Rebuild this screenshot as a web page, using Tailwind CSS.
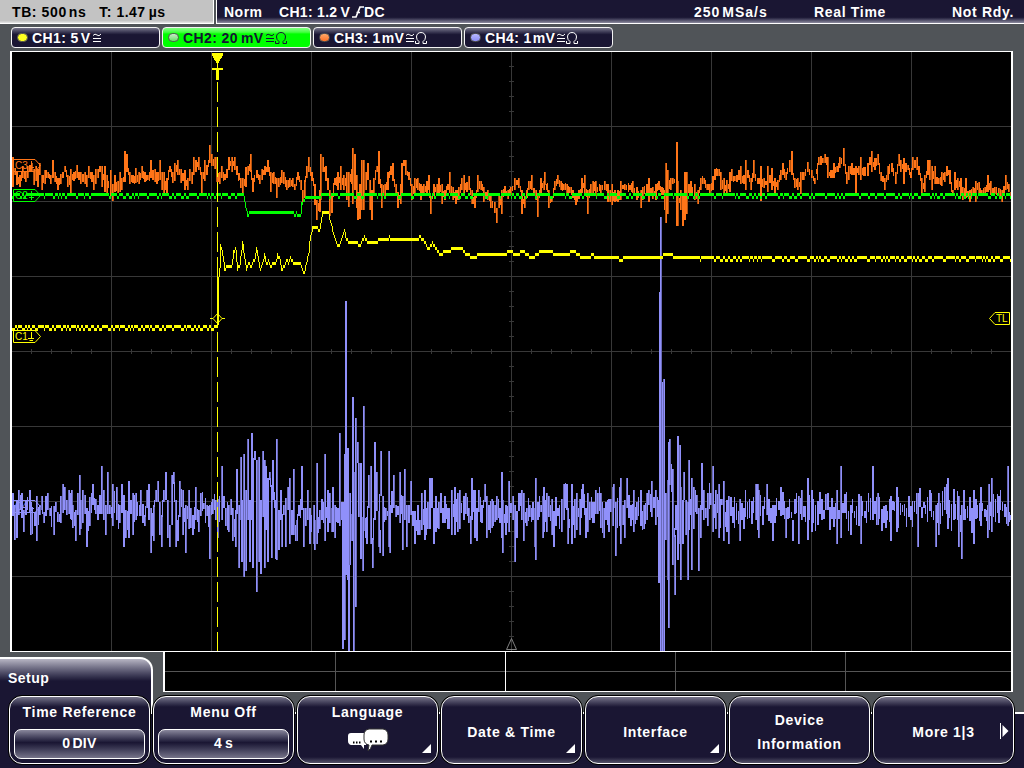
<!DOCTYPE html>
<html lang="en">
<head>
    <meta charset="UTF-8" />
    <meta name="viewport" content="width=device-width, initial-scale=1" />
    <title>Oscilloscope</title>
    <script src="https://cdn.jsdelivr.net/npm/@tailwindcss/browser@4"></script>
</head>
<body class="w-[1024px] h-[768px] overflow-hidden bg-[#505458] font-['Liberation_Sans',Arial,sans-serif] text-[14px] font-bold tracking-[0.7px] text-white whitespace-nowrap">
    <div class="flex h-full flex-col">
        <!-- Status bar -->
        <header class="flex h-6 shrink-0 gap-[2px] leading-6">
            <div class="flex w-[214px] gap-[13px] border-r border-b border-white bg-linear-to-b from-[#c3c3c3] from-90% to-[#e8e8e8] pl-3 text-black leading-[24px]">
                <span class="tracking-[0.6px]">TB: 500<span class="ml-[2px]">ns</span></span>
                <span class="tracking-[0.5px]">T: 1.47<span class="ml-[3px]">µs</span></span>
            </div>
            <div class="flex flex-1 border-l border-b border-white bg-linear-to-b from-[#1a1633] from-75% to-[#8f8da0] pl-[7px] pr-[10px]">
                <span class="w-[55px] tracking-[0.5px]">Norm</span>
                <span class="tracking-[0.3px]">CH1: 1.2<span class="ml-[3px]">V</span></span>
                <svg class="mt-[6px] ml-[2px] h-[12px] w-[12px]" viewBox="0 0 12 12" fill="none" stroke="#fff" stroke-width="1.7"><path d="M0 11H4L8 1H12M4.500 6.500H8" /></svg>
                <span class="tracking-[0.3px]">DC</span>
                <span class="ml-auto w-[120px] tracking-[1px]">250<span class="ml-[2px]">MSa/s</span></span>
                <span class="w-[138px]">Real Time</span>
                <span>Not Rdy.</span>
            </div>
        </header>

        <!-- Channels -->
        <nav class="flex h-[27px] shrink-0 gap-[2px] pt-[3px] pl-[11px] text-[14px] leading-[18px] tracking-[0.4px]">
            <div class="flex h-[21px] w-[149px] items-center rounded-[4px] border-[1.5px] border-[#f4f4f4] bg-linear-to-b from-[#77758a] via-[#1a1633] via-35% to-[#1a1633] to-75% pl-[5px]">
                <i class="mr-[4px] h-[9px] w-[11px] rounded-full border border-[#555] bg-[#ffff20]"></i>CH1: 5<span class="ml-[2px]">V</span>
                <svg class="ml-[2px] h-[10px] w-[8px]" viewBox="0 0 8 10" fill="none" stroke="#fff"><path d="M0 2.5Q2 0 4 2T8 1M0 5.5H8M0 8.5H8" /></svg>
            </div>
            <div class="flex h-[21px] w-[149px] items-center rounded-[4px] border-[1.5px] border-[#f4f4f4] bg-linear-to-b from-[#80ff80] via-[#00ff00] via-30% to-[#00ff00] pl-[5px] text-[#141432]">
                <i class="mr-[4px] h-[9px] w-[11px] rounded-full border-[1.5px] border-[#555] bg-linear-to-b from-[#c8e8c8] to-[#60e060]"></i>CH2: 20<span class="ml-[3px]">mV</span>
                <svg class="ml-[2px] h-[10px] w-[8px]" viewBox="0 0 8 10" fill="none" stroke="#141432"><path d="M0 2.5Q2 0 4 2T8 1M0 5.5H8M0 8.5H8" /></svg>
                <svg class="ml-[1px] h-[12px] w-[12px]" viewBox="0 0 12 12" fill="none" stroke="#141432"><path d="M.5 9V11.5H4V9.5Q1.5 8 1.5 5C1.5 2 3.5.5 6 .5S10.5 2 10.5 5Q10.500 8 8 9.500V11.500H11.500V9" /></svg>
            </div>
            <div class="flex h-[21px] w-[149px] items-center rounded-[4px] border-[1.5px] border-[#f4f4f4] bg-linear-to-b from-[#77758a] via-[#1a1633] via-35% to-[#1a1633] to-75% pl-[5px]">
                <i class="mr-[4px] h-[9px] w-[11px] rounded-full border border-[#555] bg-linear-to-b from-[#ffa868] to-[#ff7020]"></i>CH3: 1<span class="ml-[1px]">mV</span>
                <svg class="ml-[2px] h-[10px] w-[8px]" viewBox="0 0 8 10" fill="none" stroke="#fff"><path d="M0 2.5Q2 0 4 2T8 1M0 5.5H8M0 8.5H8" /></svg>
                <svg class="ml-[1px] h-[12px] w-[12px]" viewBox="0 0 12 12" fill="none" stroke="#fff"><path d="M.5 9V11.5H4V9.5Q1.5 8 1.5 5C1.5 2 3.5.5 6 .5S10.5 2 10.5 5Q10.500 8 8 9.500V11.500H11.500V9" /></svg>
            </div>
            <div class="flex h-[21px] w-[149px] items-center rounded-[4px] border-[1.5px] border-[#f4f4f4] bg-linear-to-b from-[#77758a] via-[#1a1633] via-35% to-[#1a1633] to-75% pl-[5px]">
                <i class="mr-[4px] h-[9px] w-[11px] rounded-full border border-[#555] bg-linear-to-b from-[#b8b8ff] to-[#8c8cf8]"></i>CH4: 1<span class="ml-[1px]">mV</span>
                <svg class="ml-[2px] h-[10px] w-[8px]" viewBox="0 0 8 10" fill="none" stroke="#fff"><path d="M0 2.5Q2 0 4 2T8 1M0 5.5H8M0 8.5H8" /></svg>
                <svg class="ml-[1px] h-[12px] w-[12px]" viewBox="0 0 12 12" fill="none" stroke="#fff"><path d="M.5 9V11.5H4V9.5Q1.5 8 1.5 5C1.5 2 3.5.5 6 .5S10.5 2 10.5 5Q10.500 8 8 9.500V11.500H11.500V9" /></svg>
            </div>
        </nav>

        <!-- Waveform display, user units are page pixels -->
        <main class="ml-[10px] h-[601px] w-[1003px] shrink-0 border-x-2 border-y border-white bg-black">
            <svg class="block h-[599px] w-[999px] font-normal tracking-normal" viewBox="12 52 999 599" fill="none">
                <g shape-rendering="crispEdges">
                    <path id="grid" stroke="#383838" />
                    <path id="c3dim" fill="#b4520f" />
                    <path id="c3" fill="#ff7518" />
                    <path id="c4dim" fill="#6a6ab8" />
                    <path id="c4" fill="#9090fa" />
                    <path id="c2" fill="#00ff00" />
                    <path id="c1" fill="#ffff00" />
                    <path d="M217.5 82V651" stroke="#ffff00" stroke-dasharray="20 5" />
                    <path d="M217.500 276V326M217.500 62V68" stroke="#ffff00" />
                    <path d="M212 53H223V55L218 64H217L212 55ZM212 68H223V70H219V80H216V70H212Z" fill="#ffff00" />
                </g>
                <path d="M217.500 313.500L222 318.500L217.500 323.500L213 318.500ZM210 318.500H213M222 318.500H225" stroke="#ffff00" />
                <path d="M511.500 638.500L506.500 649.500H516.500Z" stroke="#808080" />
                <g font-size="10" font-family="Liberation Sans">
                    <path d="M13.500 159.500H35L40.500 165.500L35 171.500H13.500ZM29 167.500H34M31.500 161V170" stroke="#ff7518" />
                    <text x="15" y="169" fill="#ff7518">C3</text>
                    <path d="M13.500 189.500H35L40.500 195.500L35 201.500H13.500ZM29 197.500H34M31.500 191V200" stroke="#00ff00" />
                    <text x="15" y="199" fill="#00ff00">C2</text>
                    <path d="M13.500 500.500H35L40.500 506.500L35 512.500H13.500ZM29 508.500H34M31.500 502V511" stroke="#9090fa" />
                    <text x="15" y="510" fill="#9090fa">C4</text>
                    <path d="M13.500 330.500H35L40.500 336.500L35 342.500H13.500ZM28 338.500H34M31.500 332V338M29.500 340.500H33" stroke="#ffff00" />
                    <text x="15" y="340" fill="#ffff00">C1</text>
                    <path d="M1009.500 312.500H995L989.500 318.500L995 324.500H1009.500Z" fill="#000" stroke="#ffff00" />
                    <text x="996" y="322" fill="#ffff00">TL</text>
                </g>
            </svg>
        </main>

        <!-- Menu title and overview strip -->
        <div class="flex h-10 shrink-0">
            <div class="relative z-10 mt-[5px] h-[57px] w-[153px] rounded-tr-[13px] border-t-2 border-r-2 border-white bg-linear-to-b from-[#b8b6c4] via-[#1a1633] via-[22px] to-[#1a1633] pl-2 leading-[39px] tracking-[0.5px]">Setup</div>
            <svg class="ml-[10px] h-10 w-[850px]" viewBox="163 652 850 40" fill="none" shape-rendering="crispEdges">
                <rect x="163" y="652" width="850" height="40" fill="#000" />
                <path d="M165 671.500H1011M335.500 652V691M675.500 652V691M845.500 652V691" stroke="#555" />
                <path d="M505.500 652V691M163 691.500H1013" stroke="#fff" />
                <path d="M164 652V691M1012 652V691" stroke="#fff" stroke-width="2" />
            </svg>
        </div>

        <!-- Soft keys -->
        <footer class="h-[76px] shrink-0 bg-[linear-gradient(transparent_20px,#fff_20px,#fff_22px,#1a1633_22px)] pt-[3px] pl-[8px]">
            <div class="relative z-20 flex gap-px text-center leading-6">
                <div class="h-[70px] w-[143px] rounded-[14px] border border-black bg-black">
                    <div class="h-full rounded-[13px] border border-white bg-linear-to-b from-[#77758a] via-[#1a1633] via-15% to-[#1a1633] px-1 pt-[3px]">
                        Time Reference
                        <div class="mt-[5px] h-[30px] rounded-[7px] border-[1.5px] border-white bg-linear-to-b from-[#8a889c] via-[#1a1633] via-45% to-[#77758a] leading-[27px] tracking-[0.3px]">0<span class="ml-[2px]">DIV</span></div>
                    </div>
                </div>
                <div class="h-[70px] w-[143px] rounded-[14px] border border-black bg-black">
                    <div class="h-full rounded-[13px] border border-white bg-linear-to-b from-[#77758a] via-[#1a1633] via-15% to-[#1a1633] px-1 pt-[3px]">
                        Menu Off
                        <div class="mt-[5px] h-[30px] rounded-[7px] border-[1.5px] border-white bg-linear-to-b from-[#8a889c] via-[#1a1633] via-45% to-[#77758a] leading-[27px] tracking-[0.3px]">4<span class="ml-[3px]">s</span></div>
                    </div>
                </div>
                <div class="h-[70px] w-[143px] rounded-[14px] border border-black bg-black">
                    <div class="relative h-full rounded-[13px] border border-white bg-[linear-gradient(#77758a,#1a1633_10px,#1a1633_60px,#55536a)] pt-[3px]">
                        Language
                        <svg class="mx-auto mt-[4px] h-[24px] w-[42px]" viewBox="0 0 42 24">
                            <path d="M4 5H19V17H17L17 21L14 17H4Q1 16 1 13V8Q1 5 4 5Z" fill="#fff" />
                            <path d="M22 1H36Q41 2 41 7V11Q41 16 36 17H25Q24 21 21 23L22 17Q17 16 17 11V7Q17 2 22 1Z" fill="#fff" stroke="#333" />
                            <path d="M6 14.500h1.500M9 14.500h1.500M12 14.500h1.500M23 13.500h2M28 13.500h2M33 13.500h2" stroke="#000" stroke-width="2" />
                        </svg>
                        <svg class="absolute right-[5px] bottom-[10px] h-[9px] w-[10px]" viewBox="0 0 10 9"><path d="M9 0V9H0Z" fill="#fff" /></svg>
                    </div>
                </div>
                <div class="h-[70px] w-[143px] rounded-[14px] border border-black bg-black">
                    <div class="relative h-full rounded-[13px] border border-white bg-[linear-gradient(#77758a,#1a1633_10px,#1a1633_60px,#55536a)] pt-[23px]">
                        Date &amp; Time
                        <svg class="absolute right-[5px] bottom-[10px] h-[9px] w-[10px]" viewBox="0 0 10 9"><path d="M9 0V9H0Z" fill="#fff" /></svg>
                    </div>
                </div>
                <div class="h-[70px] w-[143px] rounded-[14px] border border-black bg-black">
                    <div class="relative h-full rounded-[13px] border border-white bg-[linear-gradient(#77758a,#1a1633_10px,#1a1633_60px,#55536a)] pt-[23px]">
                        Interface
                        <svg class="absolute right-[5px] bottom-[10px] h-[9px] w-[10px]" viewBox="0 0 10 9"><path d="M9 0V9H0Z" fill="#fff" /></svg>
                    </div>
                </div>
                <div class="h-[70px] w-[143px] rounded-[14px] border border-black bg-black">
                    <div class="h-full rounded-[13px] border border-white bg-[linear-gradient(#77758a,#1a1633_10px,#1a1633_60px,#55536a)] pt-[11px]">Device<br />Information</div>
                </div>
                <div class="h-[70px] w-[143px] rounded-[14px] border border-black bg-black">
                    <div class="relative h-full rounded-[13px] border border-white bg-[linear-gradient(#77758a,#1a1633_10px,#1a1633_60px,#55536a)] pt-[23px]">
                        More 1|3
                        <svg class="absolute top-[26px] right-[4px] h-[16px] w-[10px]" viewBox="0 0 10 16"><path d="M1.500 0V16" stroke="#fff" /><path d="M3.500 2L9.500 8L3.500 14Z" fill="#fff" /></svg>
                    </div>
                </div>
            </div>
        </footer>
    </div>

    <script>
        let seed = 7;
        function rnd() {
            seed = (seed * 16807) % 2147483647;
            return seed / 2147483647;
        }

        function box(x, top, bottom, w) {
            return `M${x} ${top}h${w}V${bottom}h${-w}Z`;
        }

        // Graticule
        let grid = '';
        for (let x = 111; x < 1000; x += 100) grid += `M${x}.5 52V651`;
        for (let y = 126; y < 640; y += 75) grid += `M12 ${y}.5H1011`;
        for (let x = 31; x < 1011; x += 20) grid += `M${x}.5 349V354`;
        for (let y = 66; y < 651; y += 15) grid += `M509 ${y}.5H514`;
        document.getElementById('grid').setAttribute('d', grid);

        // Noisy traces: "x top bottom" per column
        const c3 = '12 157 187,14 168 175,16 172 185,19 175 187,22 166 178,25 172 182,27 166 178,31 163 172,33 169 185,35 166 181,37 169 187,39 163 175,41 175 190,44 170 184,47 172 178,50 175 184,52 160 178,54 172 182,57 178 190,60 174 184,62 172 178,64 166 172,67 175 187,70 169 194,73 172 181,76 165 178,80 172 184,84 172 184,86 175 187,88 166 178,91 172 182,93 175 190,95 169 184,97 169 178,99 166 172,101 166 187,104 166 192,106 175 193,110 170 196,112 184 201,114 175 192,117 181 193,119 172 192,121 178 190,124 151 182,126 154 172,129 172 184,132 175 183,135 168 183,138 172 184,141 166 178,144 172 182,147 175 180,150 160 178,152 170 180,154 169 182,156 172 184,159 160 180,161 172 190,163 172 193,166 178 194,169 166 172,172 172 183,174 163 181,177 160 175,180 169 183,184 170 190,187 178 190,189 169 181,191 172 184,193 157 175,195 160 172,198 157 170,201 172 195,204 160 181,206 165 175,209 145 163,211 154 166,214 157 169,216 157 182,219 172 184,221 166 178,224 174 180,226 169 178,228 157 170,231 157 172,234 157 170,236 166 175,240 178 188,242 178 195,245 167 187,247 166 175,250 154 172,252 178 192,256 170 178,259 175 184,261 169 180,264 166 175,267 160 172,270 172 192,273 172 184,276 178 198,278 178 187,281 170 183,283 172 184,286 180 190,289 178 187,292 178 187,294 184 190,297 172 180,300 180 190,302 190 202,304 180 198,306 166 178,308 157 172,311 172 181,314 184 205,316 200 220,319 190 212,320 154 200,322 157 172,325 166 181,327 178 190,329 190 216,331 195 213,334 178 185,337 172 190,340 166 190,343 175 190,346 172 200,348 172 207,351 169 184,352 148 204,354 154 190,356 175 208,357 192 220,359 184 219,361 160 210,363 160 210,365 172 190,367 163 180,369 180 210,371 190 220,373 178 196,376 166 172,378 151 184,381 184 208,384 184 196,387 172 190,390 166 175,392 163 181,395 184 196,397 192 208,400 184 204,401 163 195,403 160 166,405 160 175,408 172 180,411 184 200,414 178 196,417 178 190,420 184 200,423 184 196,426 181 194,428 175 190,430 196 214,433 184 196,436 184 195,438 178 195,441 184 204,444 190 200,447 184 190,449 172 193,452 187 200,455 190 204,458 187 200,461 178 190,463 175 196,466 182 192,468 176 190,471 190 204,474 196 208,477 175 192,480 181 190,483 187 202,487 190 200,490 196 208,494 202 213,496 208 223,498 196 208,501 190 214,504 186 196,507 190 199,510 187 195,514 178 190,518 178 188,521 190 214,524 196 208,528 181 190,531 175 190,535 190 200,537 196 217,540 178 193,543 181 190,544 172 185,548 190 208,551 196 202,554 181 190,557 175 184,560 181 190,563 184 190,566 184 196,569 187 193,572 190 198,575 196 205,578 190 199,581 178 193,584 175 196,587 190 214,590 184 196,592 181 193,595 181 196,600 185 193,604 181 190,607 184 202,609 190 202,611 184 205,614 190 202,617 190 202,620 181 200,624 184 190,629 185 190,632 181 193,636 187 200,640 190 208,642 187 200,646 184 193,648 178 202,652 187 199,655 184 200,658 181 190,661 187 195,664 190 210,665 163 223,667 170 214,670 178 190,672 178 184,676 142 226,677 181 226,680 190 210,682 196 226,684 172 220,686 172 214,690 181 196,694 184 200,697 190 204,700 178 190,703 178 184,706 184 190,709 184 196,712 176 190,714 169 180,717 169 176,720 172 190,723 178 194,726 180 195,729 172 192,731 169 181,734 176 181,738 170 180,740 166 184,743 175 184,745 160 190,747 170 178,750 178 190,753 160 178,757 178 184,760 166 201,763 178 188,767 166 192,771 168 190,774 178 196,777 180 190,780 170 180,782 163 175,785 172 180,789 160 172,791 151 175,794 178 188,797 178 190,800 172 194,803 172 180,807 162 172,811 170 178,814 178 184,818 157 165,822 158 163,824 154 163,827 157 178,830 170 178,833 163 178,836 166 172,839 157 168,843 148 166,846 172 184,848 166 180,851 163 175,855 166 194,858 166 175,860 157 180,863 167 176,867 163 176,869 157 165,871 151 172,874 158 170,877 154 165,880 172 181,884 178 190,887 166 180,891 163 172,895 172 184,898 154 166,900 160 172,903 158 184,907 165 170,910 172 178,912 157 170,916 157 170,918 166 175,921 178 194,924 175 192,927 160 175,929 160 180,931 166 190,934 166 184,938 178 184,941 172 186,944 172 182,946 166 176,949 170 184,952 190 194,954 172 190,957 178 190,960 178 196,962 187 200,965 178 198,969 190 202,972 187 194,975 181 202,978 182 193,981 190 195,984 187 194,987 175 192,990 181 195,994 187 194,998 188 196,1001 190 202,1005 175 190,1008 184 192,1010 192 199';
        const c4 = '12 493 516,14 505 540,16 500 538,18 490 515,20 495 510,21 493 518,23 510 532,25 500 515,29 490 512,30 505 535,34 512 526,36 496 541,39 505 515,41 496 510,43 512 523,47 493 510,49 508 516,53 506 535,55 502 512,57 512 522,60 496 523,62 484 513,64 487 510,66 500 515,68 490 514,71 490 520,72 505 528,75 510 541,77 493 515,79 475 535,80 500 529,82 490 523,84 495 514,86 508 547,89 497 526,92 484 505,95 499 514,97 505 520,101 466 514,103 490 520,105 505 535,107 472 514,109 505 514,112 484 526,116 487 520,119 505 523,121 484 513,123 495 547,125 510 538,128 481 538,130 500 514,132 493 535,135 493 520,139 505 516,140 490 516,144 515 526,146 490 508,148 484 520,150 508 553,153 505 541,155 490 502,157 481 502,159 502 535,161 515 547,163 490 502,165 472 500,167 500 538,169 525 547,171 475 525,173 472 484,175 500 547,177 520 541,179 481 517,182 490 535,185 505 553,188 490 529,190 508 528,192 515 535,195 487 520,198 510 532,200 493 516,203 503 509,206 505 516,209 505 559,212 499 514,215 500 520,217 499 538,221 466 520,223 496 508,225 508 526,228 505 532,230 499 515,232 508 541,235 510 547,236 469 514,238 505 568,240 457 520,241 500 562,243 454 577,245 490 571,247 439 520,249 500 562,251 433 520,252 510 568,254 451 460,256 460 592,258 457 562,260 500 574,262 451 517,264 460 568,265 466 530,267 478 562,269 472 480,271 485 558,272 460 500,275 500 559,276 439 560,278 510 550,280 490 520,281 514 547,283 505 515,285 498 547,287 487 510,289 478 544,291 510 535,293 469 535,296 520 541,298 505 516,301 466 510,303 508 547,305 508 526,307 490 520,309 508 544,313 505 544,314 520 550,316 463 544,319 510 529,321 499 520,324 454 541,327 490 532,329 493 523,331 508 532,332 487 532,334 505 538,337 508 523,339 433 526,341 502 520,342 502 649,344 454 640,345 301 575,347 448 580,348 565 651,349 493 565,351 514 541,352 397 540,353 472 651,355 418 607,357 442 463,358 463 517,360 463 559,362 517 571,363 406 531,366 517 544,368 475 508,370 466 544,372 538 568,374 442 520,376 472 511,378 511 547,379 530 553,380 451 496,382 496 556,385 508 520,388 451 547,389 505 553,393 475 508,395 505 517,399 472 523,402 496 550,404 469 520,406 505 547,408 505 523,410 481 515,412 511 526,414 511 544,417 505 535,419 520 535,421 493 530,424 490 540,425 508 535,427 502 529,429 478 529,431 478 508,433 508 544,435 496 532,438 502 529,440 493 513,442 508 523,444 496 523,447 508 529,451 490 535,454 487 535,457 493 532,459 490 529,463 496 520,465 493 514,468 508 523,470 516 544,471 478 520,474 490 538,476 508 541,478 490 512,481 505 523,484 484 502,486 496 538,488 505 530,491 499 528,494 505 522,496 496 520,499 508 523,501 472 538,502 500 553,505 505 535,508 481 532,512 496 520,514 505 562,516 511 538,518 493 511,521 490 520,523 493 541,526 508 526,529 505 517,532 502 520,534 508 547,535 478 560,537 502 520,540 505 512,542 496 538,543 487 532,546 493 532,548 496 517,551 499 535,553 511 547,557 508 516,561 499 532,563 484 520,566 484 510,567 508 544,571 484 544,574 499 538,576 493 530,579 499 535,582 484 508,585 508 538,587 493 532,589 502 520,592 502 523,595 490 514,597 493 514,600 493 528,603 508 538,605 502 520,608 499 532,610 499 512,612 487 526,613 484 508,615 502 556,619 487 526,620 478 544,622 505 525,624 500 538,626 478 508,630 505 526,633 490 532,636 502 520,640 490 526,643 505 529,646 493 520,648 490 505,651 481 517,655 490 525,658 500 583,659 292 580,660 217 651,662 382 651,663 379 651,665 493 540,667 480 580,668 442 628,669 439 485,672 469 565,674 535 595,675 505 530,677 436 560,679 445 544,680 487 580,682 500 544,683 472 500,685 500 535,687 502 580,688 460 530,690 499 515,691 478 570,693 487 529,696 495 514,698 508 571,700 505 538,701 463 510,703 490 520,705 508 518,707 493 526,710 493 505,712 466 532,715 490 529,718 484 538,719 499 528,721 499 505,723 481 541,726 500 532,728 496 544,739 499 541,755 484 520,757 484 530,758 490 538,766 484 515,772 505 541,780 487 516,785 508 538,792 520 541,798 496 544,801 490 520,807 478 540,811 490 532,825 494 510,836 490 544,840 466 538,850 505 535,860 496 544,872 466 520,877 493 525,890 496 541,896 487 532,917 493 547,935 505 547,938 493 535,944 487 510,947 478 529,958 496 547,961 505 559,963 490 520,973 490 544,980 487 526,987 505 538,988 484 530,991 478 532,998 496 523,1007 466 526,1010 515 520';

        // wide gaps between columns are filled with noise around the zero line
        function noisy(id, data, spread, zero) {
            const cols = data.split(',').map(c => c.split(' ').map(Number));
            let bright = '';
            let dim = '';
            cols.forEach(([x, top, bottom], i) => {
                const shade = rnd();
                if (shade < 0.35) {
                    bright += box(x, top, bottom, 2);
                } else if (shade < 0.8) {
                    bright += box(x, top, bottom, 1);
                    dim += box(x + 1, top, bottom, 1);
                } else {
                    dim += box(x, top, bottom, 1);
                    bright += box(x + 1, top, bottom, 1);
                }
                const next = cols[i + 1];
                if (!next) return;
                const wide = zero && next[0] - x > 4;
                if (!wide) {
                    // link to the next column where the two don't touch
                    if (next[1] > bottom) bright += box(next[0] - 1, bottom - 2, next[1] + 2, 1);
                    if (next[2] < top) bright += box(next[0] - 1, next[2] - 2, top + 2, 1);
                }
                for (let fx = x + 2; fx < next[0]; fx += 2) {
                    const mid = wide ? zero + (rnd() - 0.5) * 14 : (Math.max(top, next[1]) + Math.min(bottom, next[2])) / 2;
                    const a = Math.round(mid - 2 - rnd() * spread);
                    const b = Math.round(mid + 2 + rnd() * spread);
                    const w = fx + 1 >= next[0] ? 1 : 2;
                    bright += box(fx, a, b, rnd() < 0.6 ? 1 : w);
                }
            });
            document.getElementById(id).setAttribute('d', bright);
            document.getElementById(id + 'dim').setAttribute('d', dim);
        }
        noisy('c3', c3, 3, 0);
        noisy('c4', c4, 15, 510);

        // Flat traces: "x y dither" key points, 3px quantisation
        function level(id, data, base) {
            const keys = data.split(',').map(k => k.split(' ').map(Number));
            let d = '';
            let k = 0;
            let prev = null;
            let low = 0;
            let run = 0;
            for (let x = keys[0][0]; x < 1011; x++) {
                while (k < keys.length - 2 && keys[k + 1][0] <= x) k++;
                const [x0, y0, dither] = keys[k];
                const [x1, y1] = keys[k + 1];
                const t = Math.min(1, (x - x0) / (x1 - x0));
                let y = base + Math.round((y0 + (y1 - y0) * t - base) / 3) * 3;
                if (--run <= 0) {
                    low = low ? 0 : 3;
                    run = low ? 1 + Math.floor(rnd() * 3) : 2 + Math.floor(rnd() * rnd() * 18 / (dither || 1));
                }
                if (dither) y += low;
                if (prev !== null && Math.abs(y - prev) > 3) {
                    d += box(x, Math.min(y, prev + 3), Math.max(y + 3, prev), 1);
                } else {
                    d += box(x, y, y + 3, 1);
                }
                prev = y;
            }
            document.getElementById(id).setAttribute('d', d);
        }
        level('c2', '12 193 1,243 193 0,245 204 0,247 214 0,249 211 0,293 211 0,294 214 0,296 211 0,298 214 0,300 214 0,301 202 0,303 199 0,305 196 0,319 196 0,320 193 1,1011 193 1', 193);
        level('c1', '12 325 3,216 325 0,217 325 0,218 276 0,219 268 0,220 244 0,222 252 0,224 268 0,227 265 0,231 265 0,233 250 0,235 247 0,237 268 0,239 264 0,242 242 0,244 255 0,246 269 0,248 262 0,251 265 0,254 258 0,256 247 0,258 260 0,260 269 0,262 262 0,264 253 0,266 262 0,268 259 0,270 264 0,275 262 0,277 253 0,279 256 0,281 268 0,284 264 0,286 258 0,288 262 0,290 257 0,293 262 0,300 262 0,302 268 0,304 271 0,305 264 0,308 254 0,309 240 0,312 227 0,317 227 0,319 230 0,320 222 0,322 211 0,328 211 0,330 220 0,333 232 0,336 240 0,338 245 0,341 238 0,344 229 0,346 238 0,350 241 0,357 241 0,359 245 0,362 238 0,364 235 0,367 240 0,371 242 0,374 241 0,378 239 0,385 239 0,389 236 0,393 239 0,410 239 0,415 238 0,420 236 0,423 238 0,426 244 0,428 247 0,432 242 0,436 247 0,440 254 0,444 250 0,449 250 0,451 247 0,462 248 0,466 253 0,474 256 0,478 253 0,499 253 0,502 253 0,511 250 0,515 253 0,523 250 0,528 254 0,532 256 0,536 253 0,541 250 0,552 251 0,558 254 0,567 253 0,572 250 0,577 252 0,582 257 0,588 256 0,592 253 0,595 256 0,618 256 0,620 259 0,625 256 0,660 256 0,664 253 0,671 253 0,674 256 0,700 256 1.500,1011 256 1', 256);
    </script>
</body>
</html>
